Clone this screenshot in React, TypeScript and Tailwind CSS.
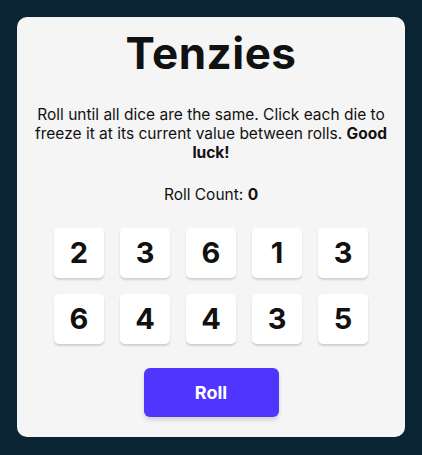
const dice = [2, 3, 6, 1, 3, 6, 4, 4, 3, 5];

export default function App() {
  return (
    <main className="min-h-[455px] w-[422px] bg-[#0B2434] p-[17px] font-['Inter',sans-serif] text-[#111]">
      <div className="h-[420px] rounded-[10px] bg-[#F5F5F5] flex flex-col items-center">
        <h1 className="mt-[8px] text-[44px] font-bold leading-[56px] tracking-[0.5px]">Tenzies</h1>
        <p className="mt-[24px] px-[18px] text-center text-[15.5px] leading-[19px]">
          Roll until all dice are the same. Click each die to freeze it at its current value between rolls.{" "}
          <b>Good luck!</b>
        </p>
        <p className="mt-[23px] text-[15.5px] leading-[19px]">
          Roll Count: <b>0</b>
        </p>
        <div className="mt-[24px] grid grid-cols-5 gap-4">
          {dice.map((d, i) => (
            <button
              key={i}
              className="w-[50px] h-[50px] rounded-[5px] bg-white shadow-[0_2px_2px_rgba(0,0,0,0.15)] text-[29px] font-bold flex items-center justify-center"
            >
              {d}
            </button>
          ))}
        </div>
        <button className="mt-[24px] w-[135px] h-[49px] rounded-[6px] bg-[#5035FF] text-white text-[18px] font-bold shadow-[0_3px_4px_rgba(0,0,0,0.15)]">
          Roll
        </button>
      </div>
    </main>
  );
}
